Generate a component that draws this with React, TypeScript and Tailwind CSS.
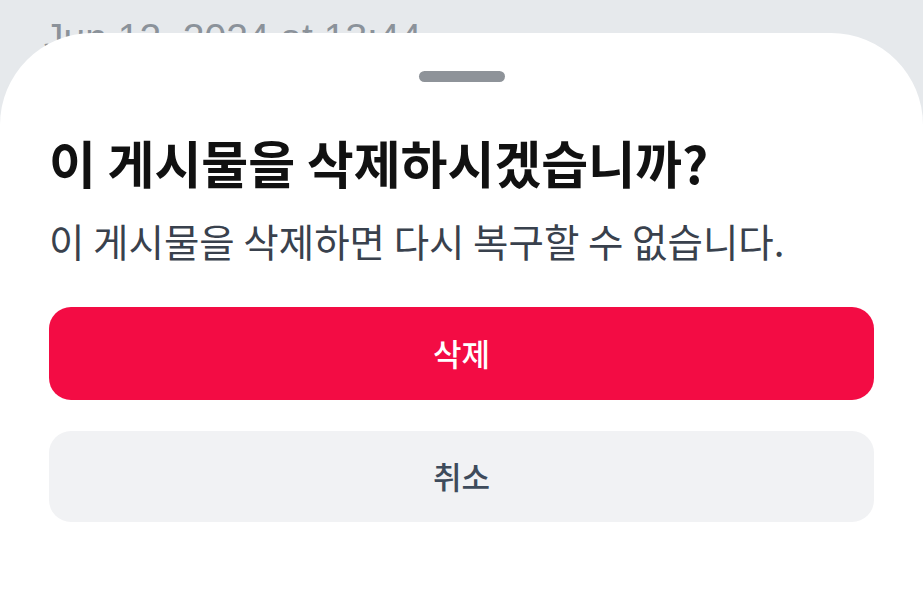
import React from 'react'

const kr = '"Noto Sans CJK KR", "Noto Sans", sans-serif'

export default function App() {
  return (
    <div className="relative h-screen w-full overflow-hidden bg-[#e6e9ec]">
      {/* page behind the sheet */}
      <div
        className="pl-[44px] pt-[18px] text-[39px] leading-[39px] text-[#8b929a]"
        style={{ fontFamily: '"Liberation Sans", Arial, sans-serif' }}
      >
        Jun 12, 2024 at 13:44
      </div>

      {/* bottom sheet */}
      <div
        className="absolute inset-x-0 top-[33px] bottom-0 flex flex-col rounded-t-[92px] bg-white px-[49px]"
        style={{ fontFamily: kr }}
      >
        <div className="mx-auto mt-[38px] h-[11px] w-[86px] rounded-full bg-[#8e9399]" />

        <h3 className="mt-[50px] text-[51px] font-bold leading-[60px] text-[#111111]">
          이 게시물을 삭제하시겠습니까?
        </h3>
        <p className="mt-[25px] text-[38.5px] leading-[46px] text-[#39414d]">
          이 게시물을 삭제하면 다시 복구할 수 없습니다.
        </p>

        <div className="mt-[44px] flex flex-col gap-[31px]">
          <button
            type="button"
            className="flex h-[93px] w-full items-center justify-center rounded-[22px] bg-[#f30c44] text-[31px] font-medium text-white"
          >
            삭제
          </button>
          <button
            type="button"
            className="flex h-[91px] w-full items-center justify-center rounded-[22px] bg-[#f1f2f4] text-[31px] font-medium text-[#3e4b5b]"
          >
            취소
          </button>
        </div>
      </div>
    </div>
  )
}
